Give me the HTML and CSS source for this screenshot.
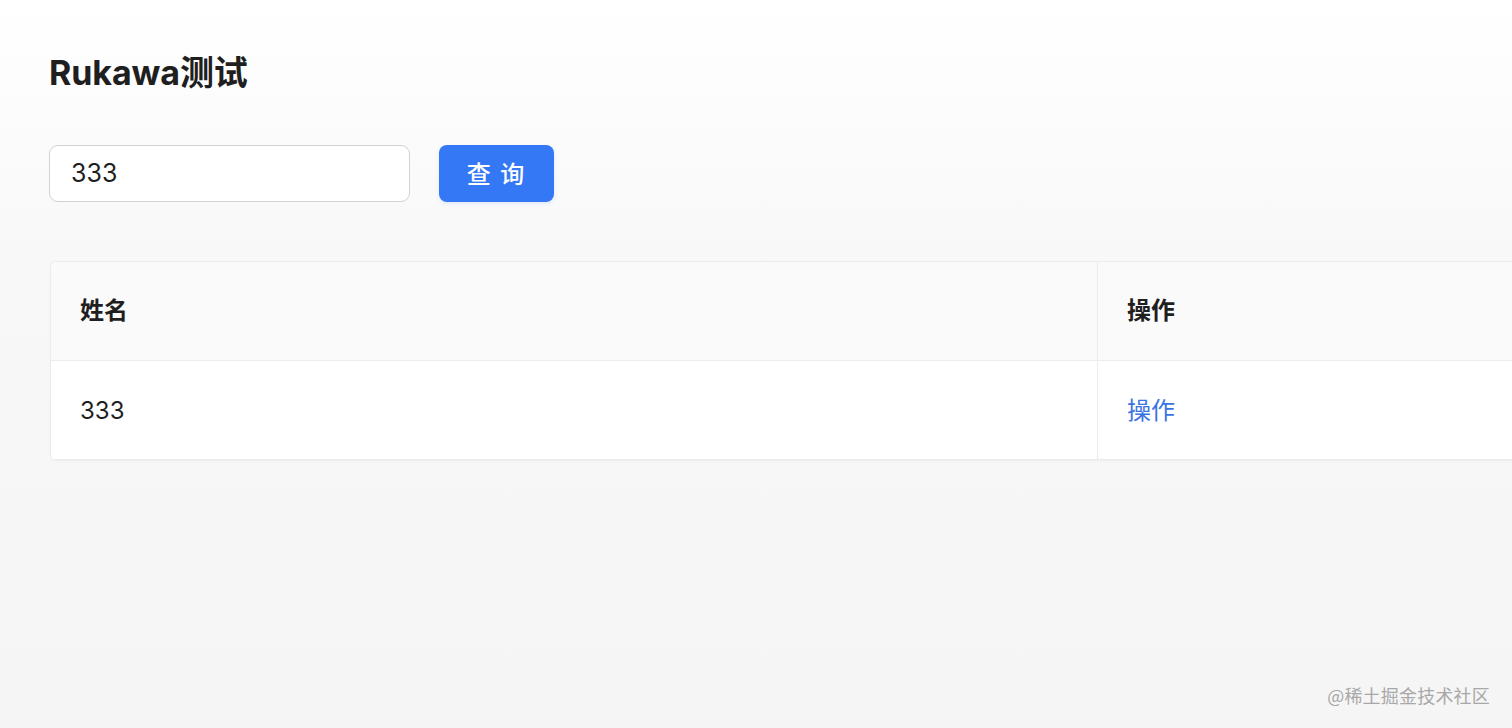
FILE: index.html
```html
<!DOCTYPE html>
<html lang="zh">
<head>
<meta charset="utf-8">
<link rel="stylesheet" href="styles.css">
</head>
<body>
<main class="page">
  <h1 class="title">Rukawa测试</h1>
  <div class="search">
    <div class="input">333</div>
    <button class="btn">查 询</button>
  </div>
  <div class="table">
    <div class="row head">
      <div class="cell c1">姓名</div>
      <div class="cell c2">操作</div>
    </div>
    <div class="row body">
      <div class="cell c1">333</div>
      <div class="cell c2 cjk"><span class="link">操作</span></div>
    </div>
  </div>
</main>
<div class="watermark">@稀土掘金技术社区</div>
</body>
</html>
```
FILE: styles.css
```css
html, body {
  margin: 0;
  padding: 0;
  width: 1512px;
  height: 728px;
  overflow: hidden;
}
body {
  background: linear-gradient(180deg, #ffffff 0px, #f8f8f8 260px, #f5f5f5 728px);
  font-family: Inter, "Noto Sans CJK SC", sans-serif;
  color: #1f1f1f;
  position: relative;
}
.page {
  padding: 49px 0 0 49px;
}
.title {
  margin: 0;
  font-size: 34px;
  line-height: 48px;
  font-weight: 700;
  color: #1f1f1f;
  letter-spacing: -0.1px;
}
.search {
  display: flex;
  gap: 29px;
  margin-top: 48px;
}
.input {
  box-sizing: border-box;
  width: 361px;
  height: 57px;
  border: 1px solid #d2d2d2;
  border-radius: 9px;
  background: #fff;
  padding: 0 21px;
  font-size: 25px;
  line-height: 55px;
  color: #1f1f1f;
}
.btn {
  box-sizing: border-box;
  width: 115px;
  height: 57px;
  border: none;
  border-radius: 8px;
  background: #3478f6;
  color: #fff;
  font-family: "Noto Sans CJK SC", sans-serif;
  font-size: 24px;
  font-weight: 500;
  letter-spacing: 2px;
  padding: 0 0 3px;
  box-shadow: 0 2px 4px rgba(52, 120, 246, 0.12);
}
.table {
  margin-top: 59px;
  margin-left: 1px;
  width: 1462px;
  border-top: 1px solid #ececec;
  border-left: 1px solid #ececec;
  border-radius: 6px 0 0 6px;
  overflow: hidden;
  box-shadow: 0 1px 2px rgba(0,0,0,0.04);
}
.row {
  display: flex;
  height: 99px;
  border-bottom: 1px solid #ececec;
  box-sizing: border-box;
}
.row.head {
  background: #fafafa;
}
.row.body {
  background: #fff;
}
.cell {
  display: flex;
  align-items: center;
  padding-left: 29px;
  font-size: 24px;
  box-sizing: border-box;
}
.c1 {
  width: 1047px;
  border-right: 1px solid #ececec;
}
.c2 {
  flex: 1;
}
.head .cell {
  font-weight: 700;
  font-family: "Noto Sans CJK SC", sans-serif;
  color: #1f1f1f;
  padding-bottom: 6px;
}
.cjk {
  padding-bottom: 3px;
}
.link {
  color: #3a74e0;
  font-family: "Noto Sans CJK SC", sans-serif;
}
.watermark {
  position: absolute;
  right: 22px;
  bottom: 20px;
  font-family: "Noto Sans CJK SC", sans-serif;
  font-size: 18px;
  color: #a8a8a8;
  letter-spacing: 0.2px;
}
```
